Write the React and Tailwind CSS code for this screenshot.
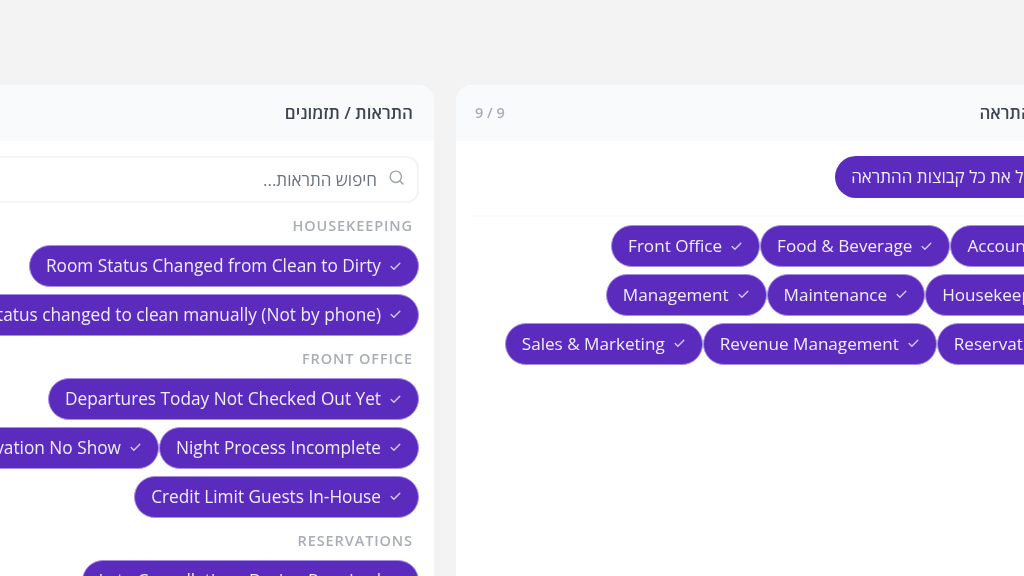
import { Check, Search } from 'lucide-react';

const font = "font-['Open_Sans','Noto_Sans',sans-serif]";

const alertGroups = [
  {
    label: 'HOUSEKEEPING',
    items: ['Room Status Changed from Clean to Dirty', 'Room status changed to clean manually (Not by phone)'],
  },
  {
    label: 'FRONT OFFICE',
    items: ['Departures Today Not Checked Out Yet', 'Night Process Incomplete', 'Reservation No Show', 'Credit Limit Guests In-House'],
  },
  {
    label: 'RESERVATIONS',
    items: ['Late Cancellations During Required'],
  },
];

const teams = [
  'Accounting',
  'Food & Beverage',
  'Front Office',
  'Housekeeping',
  'Maintenance',
  'Management',
  'Reservations',
  'Revenue Management',
  'Sales & Marketing',
];

function Pill({ label, className = 'text-[17.25px]' }) {
  return (
    <button className={`flex h-[42px] shrink-0 items-center gap-2 rounded-full border border-[#a78fe6] bg-[#5a2bbd] px-4 font-medium whitespace-nowrap text-[#f0ecfc] ${className}`}>
      <Check size={13} strokeWidth={2.5} className="text-[#d6ccf5]" />
      <span dir="ltr">{label}</span>
    </button>
  );
}

export default function App() {
  return (
    <div dir="ltr" className={`${font} flex h-[576px] w-[1024px] items-start gap-[22px] overflow-hidden bg-[#f3f3f3] pt-[85px] blur-[0.5px]`}>
      <section dir="rtl" className="-ml-[156px] flex h-[600px] w-[590px] shrink-0 flex-col overflow-hidden rounded-t-2xl bg-white">
        <header className="flex h-[56px] items-center bg-[#f9fafb] px-[21px]">
          <h2 className="text-[17px] font-semibold text-[#3f4653]">התראות / תזמונים</h2>
        </header>
        <div className="flex flex-col px-[15px] pt-[15px]">
          <div className="flex h-[47px] items-center gap-[11px] rounded-xl border-2 border-[#f3f4f6] px-[12px]">
            <Search size={17} className="-mt-[4px] text-[#9ca3af]" />
            <span className="text-[17px] text-[#6b7280]">חיפוש התראות...</span>
          </div>
          {alertGroups.map((group) => (
            <div key={group.label} className="flex flex-col pt-[13px] pb-[0.25px]">
              <p dir="ltr" className="h-[20px] px-[6px] text-right text-[14.5px] leading-[20px] font-semibold tracking-[0.9px] text-[#a8adb7]">{group.label}</p>
              <div className="mt-[9px] flex flex-wrap gap-y-[6.75px]">
                {group.items.map((item) => (
                  <Pill key={item} label={item} />
                ))}
              </div>
            </div>
          ))}
        </div>
      </section>

      <section dir="rtl" className="flex h-[600px] w-[653px] shrink-0 flex-col overflow-hidden rounded-t-2xl bg-white">
        <header className="flex h-[56px] items-center justify-between bg-[#f9fafb] pr-[22px] pl-[19px]">
          <h2 className="text-[17px] font-semibold text-[#3f4653]">קבוצות התראה</h2>
          <span dir="ltr" className="text-[14.5px] font-semibold text-[#a8adb7]">9 / 9</span>
        </header>
        <div className="flex flex-col px-[15px] pt-[15px]">
          <div className="flex border-b-2 border-[#f9fafb] pb-[17px]">
            <button className="flex h-[42px] items-center rounded-full bg-[#5a2bbd] pr-[51px] pl-4 text-[17px] font-medium text-[#f0ecfc]">בטל את כל קבוצות ההתראה</button>
          </div>
          <div className="mt-[8px] flex flex-wrap gap-y-[6.75px]">
            {teams.map((team) => (
              <Pill key={team} label={team} className="text-[17.1px]" />
            ))}
          </div>
        </div>
      </section>
    </div>
  );
}
